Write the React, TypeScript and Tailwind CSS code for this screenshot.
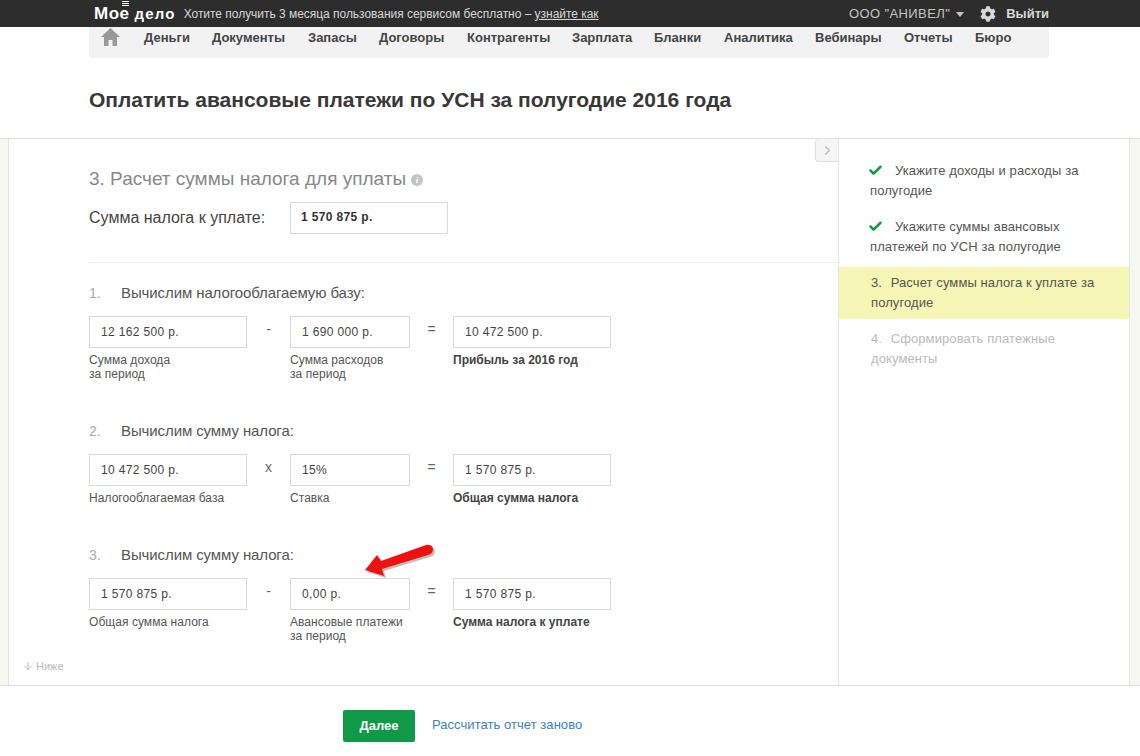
import { Check, ChevronRight, ArrowDown } from 'lucide-react';
import { FaCog } from 'react-icons/fa';

const navItems = [
  { label: 'Деньги', width: 'w-[68px]' },
  { label: 'Документы', width: 'w-[96px]' },
  { label: 'Запасы', width: 'w-[71px]' },
  { label: 'Договоры', width: 'w-[88px]' },
  { label: 'Контрагенты', width: 'w-[105px]' },
  { label: 'Зарплата', width: 'w-[82px]' },
  { label: 'Бланки', width: 'w-[70px]' },
  { label: 'Аналитика', width: 'w-[91px]' },
  { label: 'Вебинары', width: 'w-[89px]' },
  { label: 'Отчеты', width: 'w-[71px]' },
  { label: 'Бюро', width: 'w-[40px]' },
];

interface CalcCell {
  value: string;
  caption: string[];
  bold?: boolean;
}

interface CalcRow {
  num: string;
  title: string;
  op: string;
  mt: string;
  h: string;
  cells: CalcCell[];
}

const rows: CalcRow[] = [
  {
    num: '1.',
    title: 'Вычислим налогооблагаемую базу:',
    op: '-',
    mt: 'mt-[17px]',
    h: 'h-[138px]',
    cells: [
      { value: '12 162 500 р.', caption: ['Сумма дохода', 'за период'] },
      { value: '1 690 000 р.', caption: ['Сумма расходов', 'за период'] },
      { value: '10 472 500 р.', caption: ['Прибыль за 2016 год'], bold: true },
    ],
  },
  {
    num: '2.',
    title: 'Вычислим сумму налога:',
    op: 'х',
    mt: '',
    h: 'h-[124px]',
    cells: [
      { value: '10 472 500 р.', caption: ['Налогооблагаемая база'] },
      { value: '15%', caption: ['Ставка'] },
      { value: '1 570 875 р.', caption: ['Общая сумма налога'], bold: true },
    ],
  },
  {
    num: '3.',
    title: 'Вычислим сумму налога:',
    op: '-',
    mt: '',
    h: 'h-[100px]',
    cells: [
      { value: '1 570 875 р.', caption: ['Общая сумма налога'] },
      { value: '0,00 р.', caption: ['Авансовые платежи', 'за период'] },
      { value: '1 570 875 р.', caption: ['Сумма налога к уплате'], bold: true },
    ],
  },
];

const Box = ({ cell }: { cell: CalcCell }) => (
  <div>
    <div className="h-[32px] border border-[#d9d9d9] pl-[11px] text-[12px] leading-[30px] tracking-[0.35px] text-[#444]">
      {cell.value}
    </div>
    <div
      className={`mt-[5px] text-[12px] leading-[14px] ${
        cell.bold ? 'font-bold text-[#444]' : 'tracking-[0.05px] text-[#555]'
      }`}
    >
      {cell.caption.map((line) => (
        <div key={line}>{line}</div>
      ))}
    </div>
  </div>
);

const Calc = ({ row }: { row: CalcRow }) => (
  <div className={`${row.mt} ${row.h}`}>
    <div className="mb-[12px] flex h-[24px] items-center pt-[2px] text-[15px] tracking-[-0.1px] text-[#555]">
      <span className="w-[32px] text-[14px] text-[#aaa]">{row.num}</span>
      <span>{row.title}</span>
    </div>
    <div className="grid grid-cols-[158px_43px_120px_43px_158px]">
      <Box cell={row.cells[0]} />
      <div className="pt-[3px] text-center text-[14px] leading-[20px] text-[#666]">{row.op}</div>
      <Box cell={row.cells[1]} />
      <div className="pt-[3px] text-center text-[14px] leading-[20px] text-[#666]">=</div>
      <Box cell={row.cells[2]} />
    </div>
  </div>
);

const StepCheck = () => (
  <Check size={15} strokeWidth={4} className="ml-[-2px] mr-[12px] inline-block -translate-y-[1px] text-[#0f9948]" />
);

const HomeIcon = () => (
  <svg width="19" height="19" viewBox="0 0 19 19" className="text-[#999]" fill="currentColor">
    <path d="M9.5 0 L19 9 L16 9 L16 18 L11.5 18 L11.5 12 L7.5 12 L7.5 18 L3 18 L3 9 L0 9 Z" />
  </svg>
);

export default function App() {
  return (
    <div className="h-[756px] w-[1140px] overflow-hidden bg-white font-['Liberation_Sans',sans-serif]">
      {/* Top bar */}
      <div className="flex h-[27px] bg-[#2d2d2d] pl-[94px] pr-[91px]">
        <div className="relative flex items-baseline pt-[5px] font-bold leading-none text-white">
          <span className="text-[17px] tracking-[0.5px]">Мое</span>
          <span className="absolute left-[28px] top-[1px] flex w-[7px] flex-col gap-[1px]">
            <span className="h-[1px] bg-white" />
            <span className="h-[1px] bg-white" />
            <span className="h-[1px] bg-white" />
          </span>
          <span className="ml-[5px] text-[15px] tracking-[1.2px]">дело</span>
        </div>
        <div className="ml-[8px] flex items-center text-[12px] tracking-[-0.03px] text-[#d8d8d8]">
          <span>Хотите получить 3 месяца пользования сервисом бесплатно –&nbsp;</span>
          <span className="underline">узнайте как</span>
        </div>
        <div className="ml-auto flex items-center text-[13px] tracking-[0.4px] text-[#c4c4c4]">
          <span>ООО "АНИВЕЛ"</span>
          <span className="ml-[6px] mt-[2px] h-0 w-0 border-x-[4px] border-t-[5px] border-x-transparent border-t-[#c4c4c4]" />
          <FaCog size={16} className="ml-[16px] text-[#d8d8d8]" />
          <span className="ml-[10px] font-bold tracking-normal text-[#d8d8d8]">Выйти</span>
        </div>
      </div>

      {/* Navigation */}
      <div className="ml-[89px] mr-[91px] flex h-[31px] items-start rounded-b-[3px] bg-[#f2f2f2] pl-[12px] pt-[1px]">
        <div className="flex w-[43px] shrink-0">
          <HomeIcon />
        </div>
        <div className="flex h-[20px] items-center text-[13px] font-bold text-[#444]">
          {navItems.map((item) => (
            <span key={item.label} className={`${item.width} shrink-0 whitespace-nowrap`}>
              {item.label}
            </span>
          ))}
        </div>
      </div>

      {/* Title */}
      <h1 className="ml-[89px] mt-[30px] h-[50px] text-[21px] font-bold leading-[24px] text-[#383838]">
        Оплатить авансовые платежи по УСН за полугодие 2016 года
      </h1>

      {/* Body */}
      <div className="flex h-[548px] border-y border-[#e0e0e0] bg-[#f7f7f2]">
        <div className="relative ml-[8px] w-[831px] border-x border-[#e4e4e4] bg-white pl-[80px]">
          <div className="absolute right-0 top-0 flex h-[23px] w-[23px] items-center justify-center rounded-l-[4px] border-b border-l border-[#ddd] bg-[#f5f5f5]">
            <ChevronRight size={15} className="text-[#bbb]" />
          </div>

          <div className="mt-[28px] flex items-center text-[19px] leading-[24px] text-[#888]">
            3. Расчет суммы налога для уплаты
            <span className="ml-[5px] mt-[2px] flex h-[12px] w-[12px] items-center justify-center rounded-full bg-[#c4c4c4] font-['Liberation_Serif',serif] text-[9px] font-bold italic leading-none text-white">
              i
            </span>
          </div>
          <div className="mt-[11px] flex items-center">
            <span className="w-[201px] text-[16px] text-[#444]">Сумма налога к уплате:</span>
            <div className="h-[32px] w-[158px] border border-[#d9d9d9] pl-[10px] text-[12px] font-bold leading-[29px] tracking-[0.35px] text-[#333]">
              1 570 875 р.
            </div>
          </div>
          <div className="mt-[28px] border-t border-[#eee]" />

          {rows.map((row) => (
            <Calc key={row.num} row={row} />
          ))}

          {/* Red arrow annotation */}
          <svg
            className="absolute left-[355px] top-[404px]"
            width="74"
            height="38"
            viewBox="0 0 74 38"
          >
            <path d="M1 27 L13 12 L17 18 L62 2 Q68 1 69 6 Q69 11 64 12 L18 26 L20 33 Z" fill="#00000040" transform="translate(2 2)" />
            <path d="M1 27 L13 12 L17 18 L62 2 Q68 1 69 6 Q69 11 64 12 L18 26 L20 33 Z" fill="#ee1111" />
          </svg>

          <div className="absolute bottom-[11px] left-[13px] flex items-center text-[11px] text-[#bbb]">
            <ArrowDown size={12} className="mr-[2px]" />
            Ниже
          </div>
        </div>

        {/* Steps */}
        <div className="w-[291px] border-r border-[#e4e4e4] bg-white pt-[22px] text-[13px] leading-[20px] tracking-[0.1px] text-[#555]">
          <div className="h-[56px] pl-[31px] pr-[30px]">
            <StepCheck />
            Укажите доходы и расходы за полугодие
          </div>
          <div className="h-[50px] pl-[31px] pr-[30px]">
            <StepCheck />
            Укажите суммы авансовых платежей по УСН за полугодие
          </div>
          <div className="h-[52px] bg-[#f5f5b5] pl-[32px] pr-[30px] pt-[6px]">
            3.&nbsp;&nbsp;&#8202;Расчет суммы налога к уплате за полугодие
          </div>
          <div className="pl-[32px] pr-[30px] pt-[10px] text-[#bbb]">
            4.&nbsp;&nbsp;&#8202;Сформировать платежные документы
          </div>
        </div>
      </div>

      {/* Footer */}
      <div className="flex items-center pl-[343px] pt-[24px]">
        <button className="h-[32px] w-[72px] rounded-[2px] bg-[#0f9948] text-[13px] font-bold text-white">
          Далее
        </button>
        <a className="ml-[17px] -translate-y-[1px] text-[13px] tracking-[0.05px] text-[#3b7fc4]">Рассчитать отчет заново</a>
      </div>
    </div>
  );
}
